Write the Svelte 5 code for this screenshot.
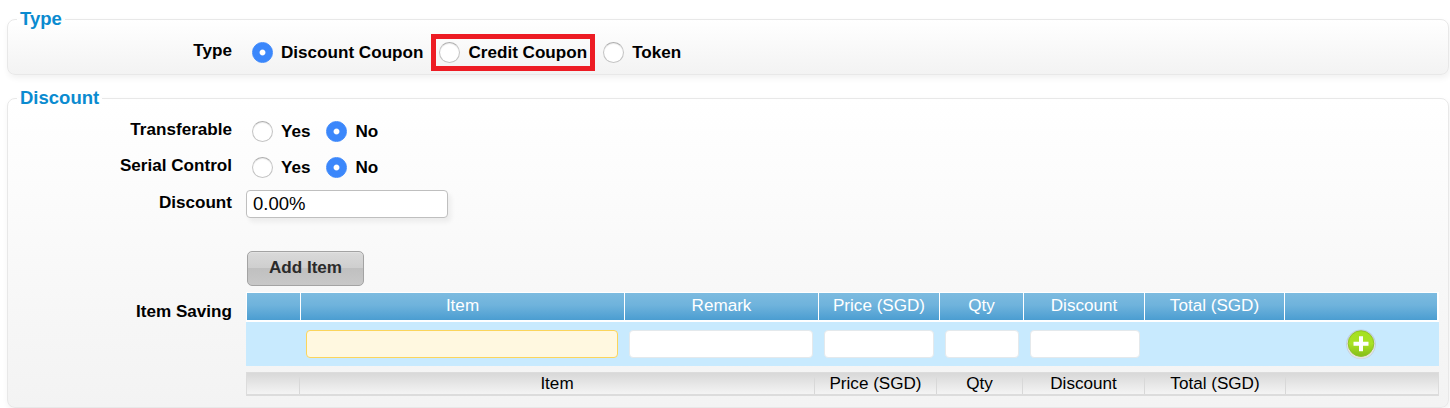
<!--
  CouponForm: coupon type and discount settings, with the item saving grid
-->
<script lang="ts">
  interface Flag {
    name: string;
    label: string;
    value: string;
  }

  const couponTypes = ['Discount Coupon', 'Credit Coupon', 'Token'];
  const highlighted = 'Credit Coupon';

  const headCols = ['', 'Item', 'Remark', 'Price (SGD)', 'Qty', 'Discount', 'Total (SGD)', ''];
  const footCols = ['', 'Item', 'Price (SGD)', 'Qty', 'Discount', 'Total (SGD)', ''];

  let couponType = $state('Discount Coupon');
  let discount = $state('0.00%');
  let flags = $state<Flag[]>([
    { name: 'transferable', label: 'Transferable', value: 'No' },
    { name: 'serial', label: 'Serial Control', value: 'No' },
  ]);
  let rows = $state([{ item: '', remark: '', price: '', qty: '', discount: '' }]);

  function addItem() {
    rows.push({ item: '', remark: '', price: '', qty: '', discount: '' });
  }
</script>

<form class="coupon-form">
  <fieldset class="type-set">
    <legend>Type</legend>
    <div class="row">
      <span class="name">Type</span>
      <div class="options">
        {#each couponTypes as type}
          <label class="option" class:highlight={type === highlighted}>
            <input type="radio" name="type" value={type} bind:group={couponType} />
            {type}
          </label>
        {/each}
      </div>
    </div>
  </fieldset>

  <fieldset class="discount-set">
    <legend>Discount</legend>
    {#each flags as flag}
      <div class="row">
        <span class="name">{flag.label}</span>
        <div class="options">
          {#each ['Yes', 'No'] as choice}
            <label class="option">
              <input type="radio" name={flag.name} value={choice} bind:group={flag.value} />
              {choice}
            </label>
          {/each}
        </div>
      </div>
    {/each}

    <div class="row discount-row">
      <label class="name" for="discount">Discount</label>
      <input id="discount" class="text" type="text" bind:value={discount} />
    </div>

    <div class="row saving-row">
      <span class="name">Item Saving</span>
      <div class="saving">
        <button type="button" class="btn-add" onclick={addItem}>Add Item</button>

        <div class="head">
          {#each headCols as col}
            <span>{col}</span>
          {/each}
        </div>

        {#each rows as row}
          <div class="line">
            <span></span>
            <input class="required" type="text" aria-label="Item" bind:value={row.item} />
            <input type="text" aria-label="Remark" bind:value={row.remark} />
            <input type="text" aria-label="Price" bind:value={row.price} />
            <input type="text" aria-label="Qty" bind:value={row.qty} />
            <input type="text" aria-label="Discount" bind:value={row.discount} />
            <span></span>
            <button type="button" class="btn-plus" onclick={addItem} aria-label="Add">
              <svg width="32" height="32" viewBox="0 0 32 32">
                <defs>
                  <linearGradient id="green" x1="0" y1="0" x2="0" y2="1">
                    <stop offset="0" stop-color="#a5e01f" />
                    <stop offset="0.5" stop-color="#a9e224" />
                    <stop offset="1" stop-color="#86bd17" />
                  </linearGradient>
                </defs>
                <circle cx="16" cy="16.2" r="14.8" fill="#b9bfd0" opacity="0.7" />
                <circle cx="16" cy="16.8" r="14" fill="#e4e2dc" />
                <circle cx="16" cy="15.6" r="12.8" fill="url(#green)" stroke="#8fc42a" />
                <path d="M16 8.2v15M8.5 15.7h15" stroke="#fff" stroke-width="4" />
              </svg>
            </button>
          </div>
        {/each}

        <div class="foot">
          {#each footCols as col}
            <span>{col}</span>
          {/each}
        </div>
      </div>
    </div>
  </fieldset>
</form>

<style>
  :global(body) {
    background: #fff;
    overflow: hidden;
  }

  .coupon-form {
    height: 408px;
    box-sizing: border-box;
    padding: 9px 1px 0 7px;
    font-family: 'Liberation Sans', Arial, sans-serif;
    font-size: 17.1px;
    line-height: 20px;
    color: #000;
  }

  fieldset {
    box-sizing: border-box;
    min-width: 0;
    margin: 0;
    padding: 0;
    border: 1px solid #e8e8e8;
    border-radius: 8px;
    background: linear-gradient(#fff, #f3f3f3);
    box-shadow: 1px 3px 6px rgba(0, 0, 0, 0.06);
  }
  .type-set { height: 66px; }
  .discount-set {
    height: 320px;
    margin-top: 13px;
  }

  legend {
    margin-left: 9px;
    padding: 0 3px;
    font-size: 18.5px;
    font-weight: bold;
    line-height: 20px;
    color: #0a8bd0;
  }

  .row {
    display: grid;
    grid-template-columns: 224px 1fr;
    column-gap: 15px;
    align-items: start;
    height: 36px;
  }
  .type-set .row { padding-top: 12px; }
  .discount-set legend + .row { margin-top: 12px; }

  .name {
    text-align: right;
    font-weight: bold;
  }

  .options {
    display: flex;
    gap: 16px;
    padding: 2px 0 0 5px;
  }

  .option {
    position: relative;
    display: flex;
    align-items: center;
    gap: 8px;
    font-weight: bold;
    white-space: nowrap;
  }

  .highlight::after {
    content: '';
    position: absolute;
    inset: -9px -8px -8px;
    border: 5px solid #ed1c24;
  }

  input[type='radio'] {
    appearance: none;
    box-sizing: border-box;
    width: 21px;
    height: 21px;
    margin: -1px 0 0;
    border: 1px solid #c4c4c4;
    border-top-color: #adadad;
    border-radius: 50%;
    background: #fff;
    box-shadow: inset 0 1px 1px rgba(0, 0, 0, 0.08);
  }
  input[type='radio']:checked {
    border-color: #3b87fb;
    background: radial-gradient(circle, #fff 2.4px, #3b87fb 3.4px);
    box-shadow: none;
  }

  input[type='text'] {
    box-sizing: border-box;
    min-width: 0;
    height: 28px;
    margin: 0;
    padding: 0 6px;
    border: 1px solid #e4e9ec;
    border-radius: 4px;
    background: #fff;
    font-family: inherit;
    font-size: 18.5px;
    color: #000;
  }
  input[type='text'].text {
    width: 202px;
    margin: -3px 0 0 -1px;
    border: 1px solid #bfbfbf;
    box-shadow: 3px 4px 5px rgba(0, 0, 0, 0.06);
  }
  input[type='text'].required {
    border-color: #fbd55c;
    background: #fff8e0;
  }

  .discount-row {
    height: 58px;
    margin-top: 1px;
  }

  .saving-row .name { padding-top: 51px; }
  .saving {
    display: flex;
    flex-direction: column;
    margin-left: -1px;
  }

  .btn-add {
    align-self: flex-start;
    box-sizing: border-box;
    width: 117px;
    height: 35px;
    margin: 0 0 6px 1px;
    padding: 0 0 2px;
    border: 1px solid #a3a3a3;
    border-radius: 5px;
    background: linear-gradient(#dadada, #cecece 50%, #c0c0c0 50%, #c8c8c8);
    box-shadow: inset 0 1px 0 #e2e2e2;
    font-family: inherit;
    font-size: 17.1px;
    font-weight: bold;
    color: #2b2b2b;
  }

  .head {
    display: grid;
    grid-template-columns: 54px 324px 194px 121px 84px 121px 140px 152px;
    width: 1190px;
    height: 27px;
    border: 1px solid #fff;
    border-width: 1px 2px 2px 1px;
    background: linear-gradient(#7cbbe0, #6fb3dc 45%, #4b9dd1);
    line-height: 26px;
    text-align: center;
    color: #fff;
  }
  .head span { border-right: 1px solid #fff; }
  .head span:last-child { border-right: 0; }

  .line {
    display: grid;
    grid-template-columns: 49px 312px 184px 110px 74px 110px 127px 122px;
    column-gap: 11px;
    align-items: center;
    width: 1193px;
    height: 44px;
    background: #c8eafe;
  }

  .btn-plus {
    width: 32px;
    height: 32px;
    margin-left: 56px;
    padding: 0;
    border: 0;
    background: none;
  }
  .btn-plus svg { display: block; }

  .foot {
    display: grid;
    grid-template-columns: 53px 515px 122px 86px 122px 141px 1fr;
    box-sizing: border-box;
    width: 1193px;
    height: 24px;
    margin-top: 6px;
    border: 1px solid #dcdcdc;
    border-width: 1px 1px 2px;
    background: linear-gradient(#d8d8d8, #f4f4f4);
    line-height: 21px;
    text-align: center;
  }
  .foot span {
    border-right: 1px solid;
    border-image: linear-gradient(transparent 20%, #d8d8d8 30%) 1;
  }
  .foot span:last-child { border-right: 0; }
</style>
